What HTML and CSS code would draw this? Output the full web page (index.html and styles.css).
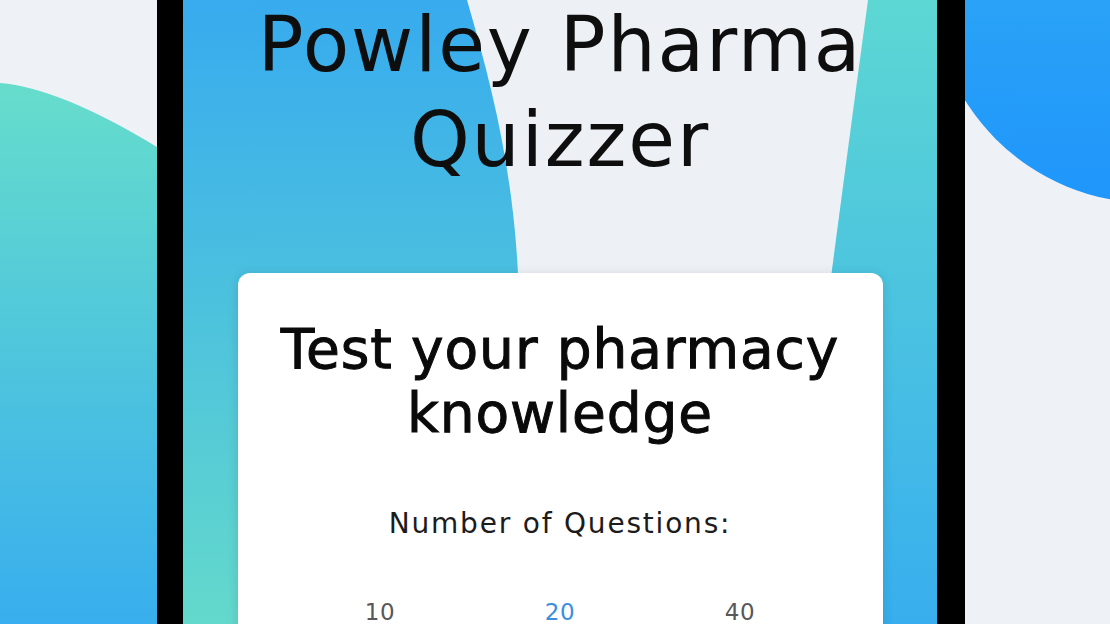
FILE: index.html
```html
<!DOCTYPE html>
<html lang="en">
<head>
<meta charset="utf-8">
<title>Powley Pharma Quizzer</title>
<link rel="stylesheet" href="styles.css">
</head>
<body>
<div class="page">
  <div class="side side-left">
    <svg class="side-art" viewBox="0 0 157 624" preserveAspectRatio="none" aria-hidden="true">
      <defs>
        <linearGradient id="lg" x1="0" y1="83" x2="0" y2="624" gradientUnits="userSpaceOnUse">
          <stop offset="0" stop-color="#66ddcb"/>
          <stop offset="1" stop-color="#38aeee"/>
        </linearGradient>
      </defs>
      <path d="M0,83 Q60,88 157,147 L157,624 L0,624 Z" fill="url(#lg)"/>
    </svg>
  </div>
  <div class="phone">
    <div class="screen">
      <svg class="screen-art" viewBox="0 0 754 624" preserveAspectRatio="none" aria-hidden="true">
        <defs>
          <linearGradient id="bl" x1="0" y1="0" x2="0" y2="624" gradientUnits="userSpaceOnUse">
            <stop offset="0" stop-color="#37abee"/>
            <stop offset="1" stop-color="#63d9cc"/>
          </linearGradient>
          <linearGradient id="br" x1="0" y1="0" x2="0" y2="624" gradientUnits="userSpaceOnUse">
            <stop offset="0" stop-color="#5dd7d3"/>
            <stop offset="1" stop-color="#38aeee"/>
          </linearGradient>
        </defs>
        <rect width="754" height="624" fill="#edf1f6"/>
        <path d="M0,0 L284,0 C310,90 333,180 336,300 L336,624 L0,624 Z" fill="url(#bl)"/>
        <path d="M685,0 Q666,140 645,300 L640,624 L754,624 L754,0 Z" fill="url(#br)"/>
      </svg>
      <div class="screen-content">
        <h1 class="app-title">
          <span class="title-line title-line-first">Powley Pharma</span>
          <span class="title-line title-line-second">Quizzer</span>
        </h1>
        <section class="card">
          <h2 class="card-title">Test your pharmacy<br>knowledge</h2>
          <p class="card-label">Number of Questions:</p>
          <div class="choices">
            <span class="choice">10</span>
            <span class="choice choice-active">20</span>
            <span class="choice">40</span>
          </div>
        </section>
      </div>
    </div>
  </div>
  <div class="side side-right">
    <svg class="side-art" viewBox="0 0 145 624" preserveAspectRatio="none" aria-hidden="true">
      <defs>
        <linearGradient id="rg" x1="0" y1="0" x2="0" y2="200" gradientUnits="userSpaceOnUse">
          <stop offset="0" stop-color="#29a2f7"/>
          <stop offset="1" stop-color="#1f96fb"/>
        </linearGradient>
      </defs>
      <circle cx="185" cy="-15" r="218" fill="url(#rg)"/>
    </svg>
  </div>
</div>
</body>
</html>
```

FILE: styles.css
```css
html, body {
  margin: 0;
  padding: 0;
  background: #eef1f5;
}

.page {
  display: flex;
  width: 1110px;
  height: 624px;
  overflow: hidden;
  font-family: "DejaVu Sans", "Open Sans", sans-serif;
}

.side {
  height: 624px;
  background: #eef1f5;
}

.side-left {
  width: 157px;
  flex: 0 0 157px;
}

.side-right {
  flex: 1 1 auto;
}

.side-art {
  display: block;
  width: 100%;
  height: 100%;
}

.phone {
  flex: 0 0 auto;
  width: 754px;
  height: 624px;
  border-left: 26px solid #000;
  border-right: 28px solid #000;
}

.screen {
  position: relative;
  width: 754px;
  height: 624px;
  overflow: hidden;
}

.screen-art {
  position: absolute;
  left: 0;
  top: 0;
  width: 754px;
  height: 624px;
  display: block;
}

.screen-content {
  position: relative;
  display: flex;
  flex-direction: column;
  align-items: center;
}

.app-title {
  margin: 0;
  font-size: 76px;
  font-weight: 400;
  color: #0e0e0e;
  text-align: center;
  letter-spacing: 1.9px;
}

.title-line {
  display: block;
  white-space: nowrap;
}

.title-line-first {
  line-height: 90px;
}

.title-line-second {
  line-height: 100px;
}

.card {
  margin-top: 83px;
  width: 645px;
  height: 400px;
  background: #ffffff;
  border-radius: 12px;
  box-shadow: 0 2px 12px rgba(0, 0, 0, 0.12);
  padding-top: 44px;
  box-sizing: border-box;
  display: flex;
  flex-direction: column;
  align-items: center;
}

.card-title {
  margin: 0;
  font-size: 55px;
  line-height: 64px;
  font-weight: 400;
  color: #0a0a0a;
  text-align: center;
  -webkit-text-stroke: 1px #0a0a0a;
  letter-spacing: 0.9px;
}

.card-label {
  margin: 62px 0 0 0;
  font-size: 28px;
  line-height: 34px;
  color: #1c1c1c;
  letter-spacing: 1.8px;
}

.choices {
  margin-top: 57px;
  display: grid;
  grid-template-columns: repeat(3, 180px);
  justify-items: center;
}

.choice {
  font-size: 23px;
  line-height: 28px;
  color: #585858;
  letter-spacing: 0.5px;
}

.choice-active {
  color: #3b8fdc;
}
```
